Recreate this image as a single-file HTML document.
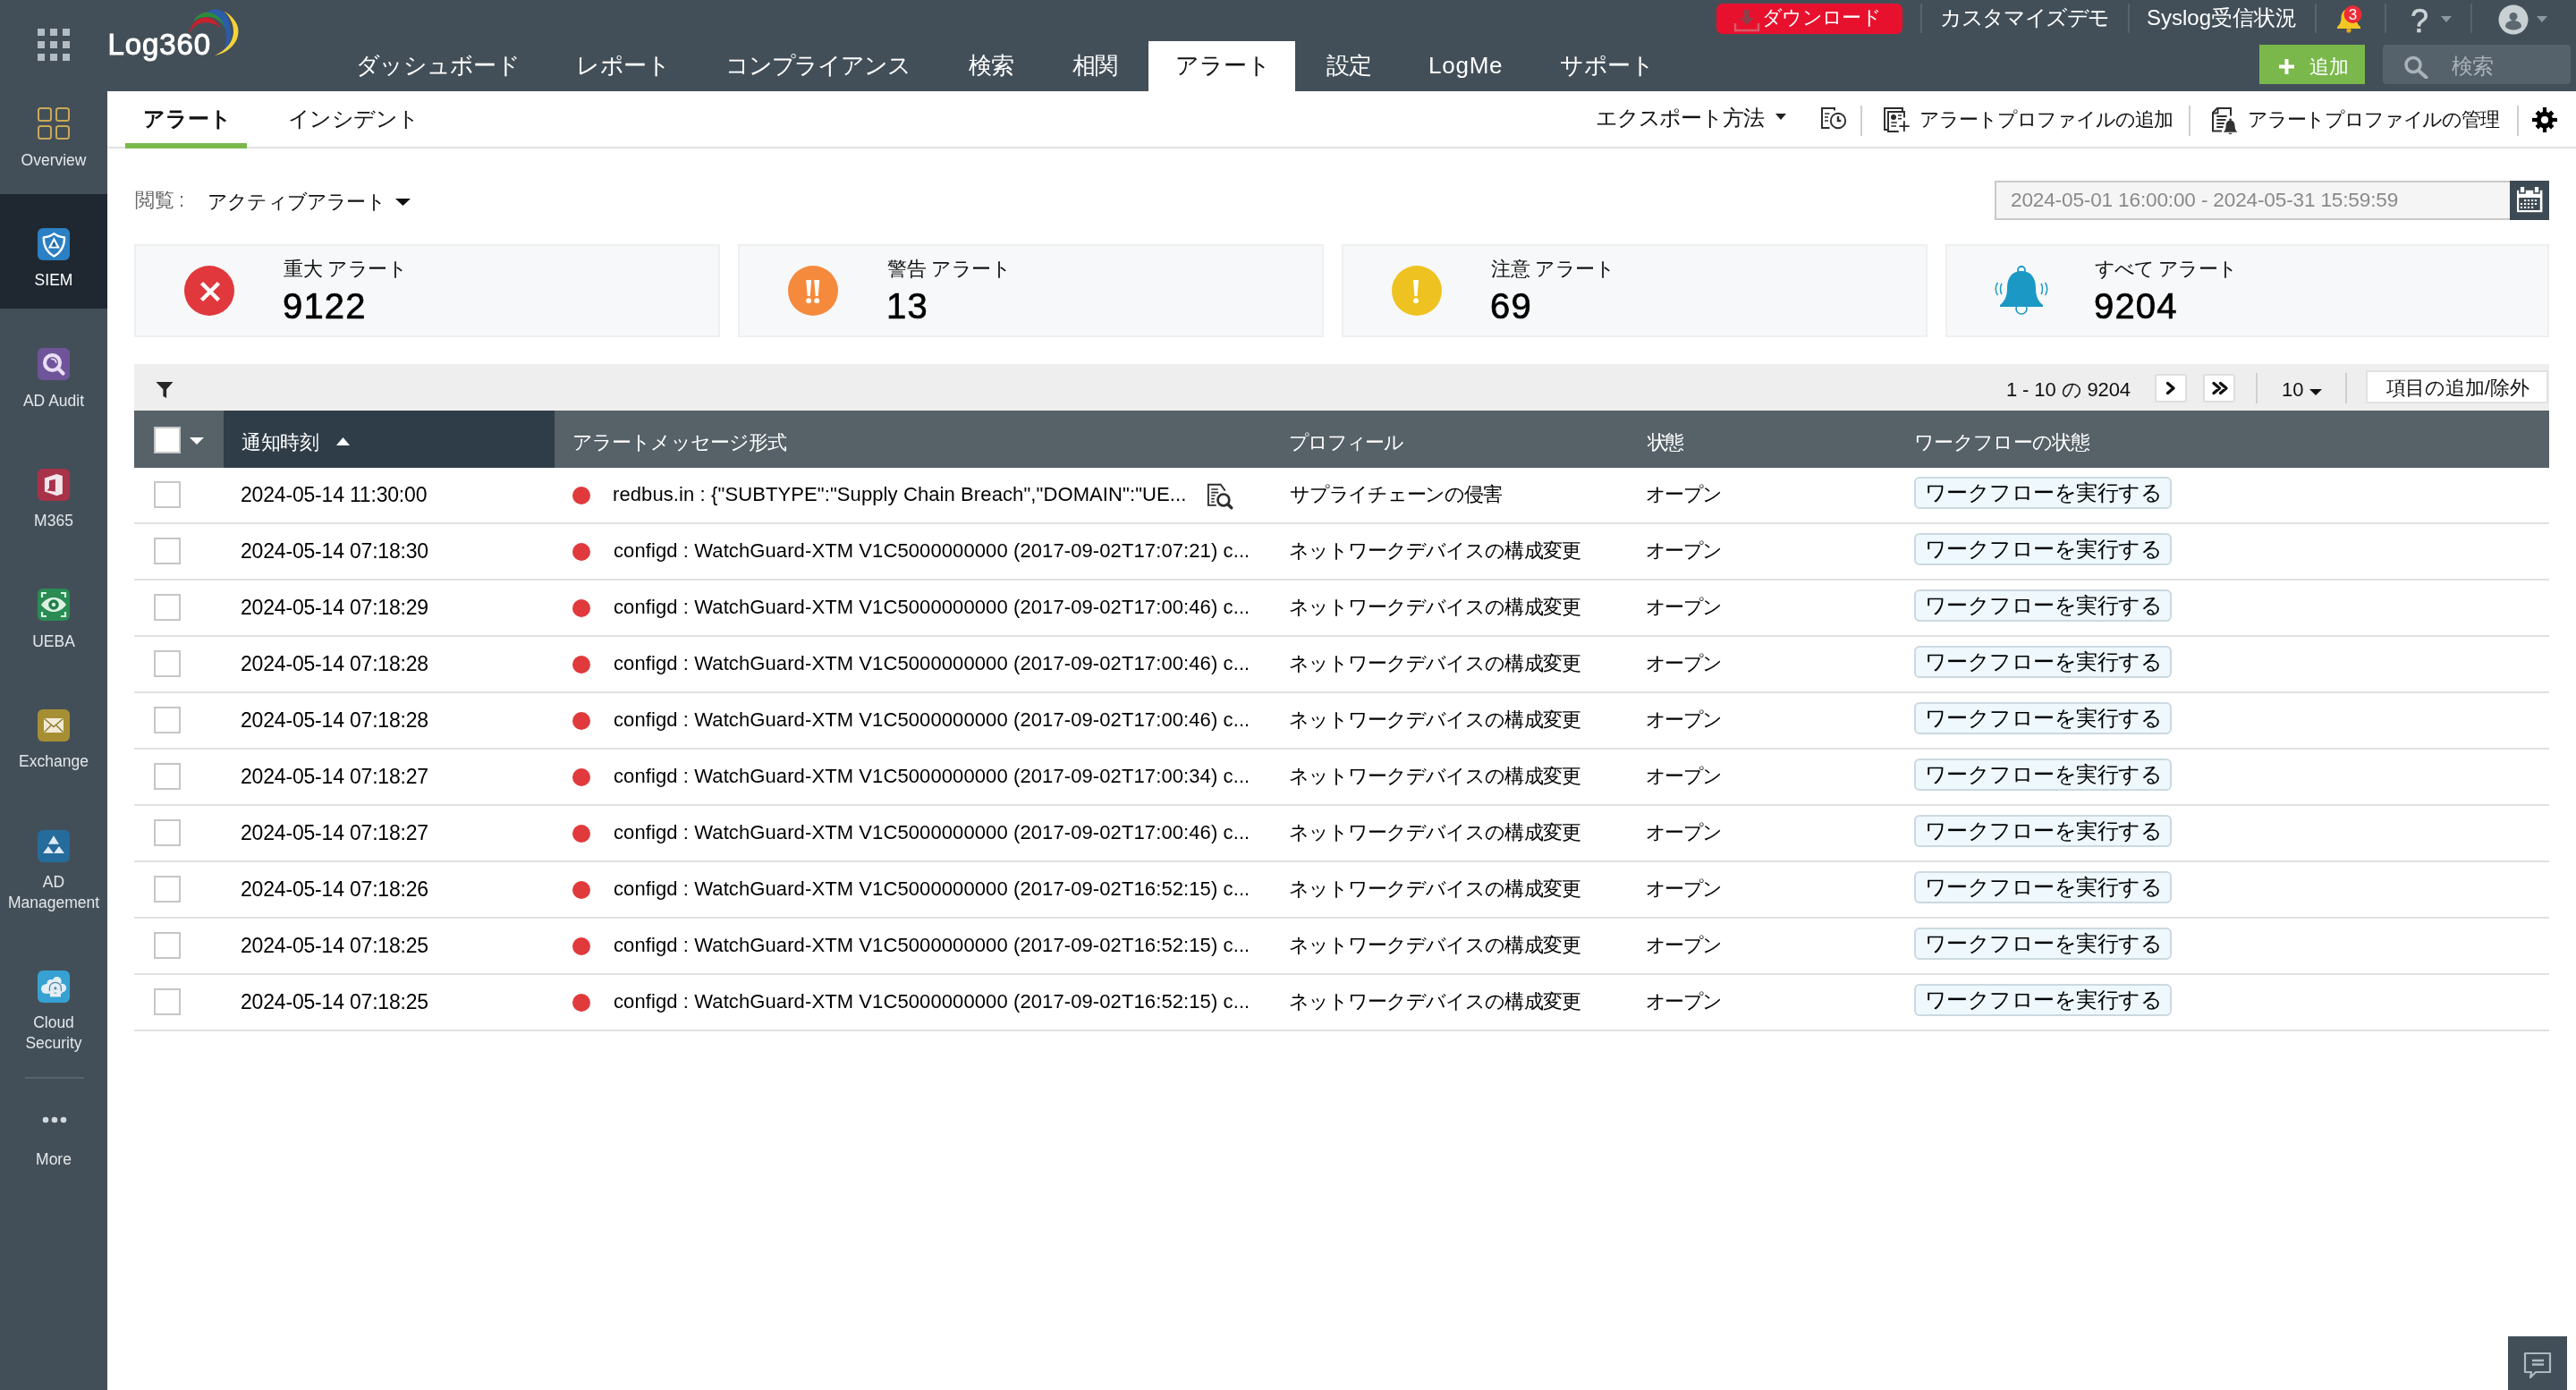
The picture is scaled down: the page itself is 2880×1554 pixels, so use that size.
<!DOCTYPE html>
<html lang="ja">
<head>
<meta charset="utf-8">
<title>Log360</title>
<style>
*{box-sizing:border-box;margin:0;padding:0}
html,body{width:2880px;height:1554px;overflow:hidden;background:#fff}
body{font-family:"Liberation Sans",sans-serif;color:#000;position:relative}
.a{position:absolute;white-space:nowrap}
svg{display:block;position:absolute}
/* top */
#top{left:0;top:0;width:2880px;height:102px;background:#434f58}
#side{left:0;top:102px;width:120px;height:1452px;background:#434f58}
.nav{top:55px;height:36px;line-height:36px;font-size:26px;color:#fff}
#navact{left:1284px;top:46px;width:164px;height:56px;background:#fff}
.tr{top:3px;height:34px;line-height:34px;font-size:24px;color:#fff}
.vsep{width:2px;background:#58636c;top:4px;height:33px}
/* sidebar */
.sic{left:42px;width:36px;height:36px;border-radius:6px}
.slb{left:0;width:120px;text-align:center;font-size:17.5px;line-height:23px;color:#e3e7ea}
/* subtab */
.st{top:114px;height:36px;line-height:36px;font-size:24px;color:#111}
.ssep{width:2px;background:#cfcfcf;top:118px;height:34px}
/* cards */
.card{top:273px;height:104px;background:#f7f8f9;border:2px solid #eeeff0}
.clab{top:286px;height:30px;line-height:30px;font-size:22px;color:#111}
.cnum{top:318px;height:48px;line-height:48px;font-size:40px;color:#000;-webkit-text-stroke:0.700px #000}
.circ{top:297px;width:56px;height:56px;border-radius:50%}
/* table */
.th{top:479px;height:32px;line-height:32px;font-size:22px;color:#fff}
.row{left:150px;width:2700px;height:63px;border-bottom:2px solid #e1e1e1}
.row .a{top:13px;height:34px;line-height:34px;font-size:22px;color:#000}
.cb{left:22px;top:15px !important;width:30px;height:30px !important;border:2px solid #c6c6c6;background:#fff}
.dot{left:490px;top:21px !important;width:20px;height:20px !important;border-radius:50%;background:#e03a3c}
.wf{left:1990px;top:10px !important;width:288px;height:36px !important;line-height:32px !important;border:2px solid #cbd9e0;border-radius:6px;background:#eef8fd;font-size:24px !important;text-align:center}
.row .wft{font-size:24px;top:11px;letter-spacing:-0.47px}
.row .dt{letter-spacing:-.19px;font-size:23px}
.row .msg{letter-spacing:.1px}
.row .stt{letter-spacing:-1.67px}
.pb{top:418px;width:36px;height:32px;background:#fff;border:2px solid #dedede;border-radius:3px}
</style>
</head>
<body><div id="wrap" style="position:absolute;left:0;top:0;width:2880px;height:1554px;will-change:transform">
<div class="a" id="top"></div>
<div class="a" id="side"></div>

<!-- TOPBAR -->
<svg class="a" style="left:42px;top:32px" width="36" height="36" viewBox="0 0 36 36" fill="#b3bcc2"><rect x="0" y="0" width="8" height="8"/><rect x="14" y="0" width="8" height="8"/><rect x="28" y="0" width="8" height="8"/><rect x="0" y="14" width="8" height="8"/><rect x="14" y="14" width="8" height="8"/><rect x="28" y="14" width="8" height="8"/><rect x="0" y="28" width="8" height="8"/><rect x="14" y="28" width="8" height="8"/><rect x="28" y="28" width="8" height="8"/></svg>
<div class="a" id="logo" style="left:120.500px;top:30px;height:40px;line-height:40px;font-size:33px;color:#fff;-webkit-text-stroke:1px #fff;letter-spacing:0.900px">Log360</div>
<svg class="a" id="swoosh" style="left:208px;top:6px" width="62" height="60" viewBox="0 0 62 60">
<g transform="translate(0,2)"><path d="M4.400 28.500C5 18 14 11.500 22 11.500C29 11.500 35 16 38.500 23.500C33 18.500 27 17 21.500 17.200C13 17.500 7 22 4.400 30Z" fill="#c8202c"/>
<path d="M8 16C12 8.500 19 5.500 25 5.500C35 5.500 43 14 46 27.500C41 17 33.500 10.800 25 10.800C18 10.800 12 12.500 8 16Z" fill="#2e8b3e"/>
<path d="M23.500 5.500C28 2.500 34 1.500 39 3.500C47 8 51 20 49.500 36C48.500 42 45 47 41 49.500C44.500 44 45.500 38 45 31C44 18 37 7 23.500 5.500Z" fill="#2a5caa"/></g>
<path d="M42.500 6.500C52 12 58.500 20 58.500 29C58.500 43 46 53.500 32 56C44 51 53 41 53 29C53 20 49 12.500 42.500 6.500Z" fill="#f4d23a"/>
</svg>

<div class="a nav" id="n1" style="left:398px;letter-spacing:-0.75px">ダッシュボード</div>
<div class="a nav" id="n2" style="left:644px;letter-spacing:-0.5px">レポート</div>
<div class="a nav" id="n3" style="left:811px;letter-spacing:-1.21px">コンプライアンス</div>
<div class="a nav" id="n4" style="left:1083px;letter-spacing:-1px">検索</div>
<div class="a nav" id="n5" style="left:1199px;letter-spacing:-1px">相関</div>
<div class="a" id="navact"></div>
<div class="a nav" id="n6" style="left:1314px;color:#111">アラート</div>
<div class="a nav" id="n7" style="left:1483px;letter-spacing:-1px">設定</div>
<div class="a nav" id="n8" style="left:1597px;letter-spacing:0.75px">LogMe</div>
<div class="a nav" id="n9" style="left:1744px;letter-spacing:-0.5px">サポート</div>

<div class="a" id="dl" style="left:1919px;top:4px;width:208px;height:34px;background:#e8112d;border-radius:7px"></div>
<svg class="a" style="left:1938px;top:10px" width="30" height="26" viewBox="0 0 30 26"><path d="M12 1h6v9h5l-8 8-8-8h5z" fill="#8e3f4c"/><path d="M2 16v8h26v-8" fill="none" stroke="#d65a68" stroke-width="2.5"/></svg>
<div class="a" id="dlt" style="left:1970px;top:3px;height:34px;line-height:33px;font-size:22px;color:#fff;letter-spacing:-0.7px">ダウンロード</div>
<div class="a vsep" style="left:2147px"></div>
<div class="a tr" id="t1" style="left:2169px;letter-spacing:-1.36px">カスタマイズデモ</div>
<div class="a vsep" style="left:2379px"></div>
<div class="a tr" id="t2" style="left:2400px">Syslog受信状況</div>
<div class="a vsep" style="left:2588px"></div>
<svg class="a" style="left:2611px;top:6px" width="32" height="32" viewBox="0 0 32 32"><path d="M15 4c-6 0-8.5 5-8.500 10 0 5-2 8-4.500 10v2h26v-2c-2.500-2-4.500-5-4.500-10 0-5-2.500-10-8.500-10z" fill="#f3c623"/><circle cx="15" cy="28" r="2.600" fill="#e0a81a"/><circle cx="19.500" cy="10" r="10" fill="#ee2b37"/><text x="19.500" y="16" font-family="Liberation Sans, sans-serif" font-size="17" fill="#fff" text-anchor="middle">3</text></svg>
<div class="a vsep" style="left:2666px"></div>
<div class="a" id="qm" style="left:2695px;top:4px;height:40px;line-height:40px;font-size:36px;color:#ccd3d7;-webkit-text-stroke:0.600px #ccd3d7">?</div>
<svg class="a" style="left:2729px;top:18px" width="12" height="7" viewBox="0 0 12 7"><path d="M0 0h12l-6 7z" fill="#8d979e"/></svg>
<div class="a vsep" style="left:2762px"></div>
<svg class="a" style="left:2793px;top:5px" width="34" height="34" viewBox="0 0 34 34"><circle cx="17" cy="17" r="16.500" fill="#c9d0d4"/><circle cx="17" cy="13.500" r="4.500" fill="#5d6870"/><path d="M8 25c0-5 4-7 9-7s9 2 9 7c-2 2-5 3.500-9 3.500s-7-1.500-9-3.500z" fill="#5d6870"/></svg>
<svg class="a" style="left:2836px;top:18px" width="12" height="7" viewBox="0 0 12 7"><path d="M0 0h12l-6 7z" fill="#8d979e"/></svg>

<div class="a" id="addb" style="left:2526px;top:50px;width:118px;height:44px;background:#7ab84c"></div>
<svg class="a" style="left:2548px;top:66px" width="17" height="17" viewBox="0 0 17 17"><path d="M6.500 0h4v6.500h6.500v4h-6.500v6.500h-4v-6.500h-6.500v-4h6.500z" fill="#fff"/></svg>
<div class="a" id="addt" style="left:2581.5px;top:57px;height:36px;line-height:36px;font-size:22px;color:#fff">追加</div>
<div class="a" id="srch" style="left:2664px;top:50px;width:210px;height:44px;background:#56626b;border-radius:4px"></div>
<svg class="a" style="left:2687px;top:62px" width="28" height="26" viewBox="0 0 28 26"><circle cx="11" cy="10.500" r="8" fill="none" stroke="#a9b2b8" stroke-width="3.500"/><path d="M16.500 16.500l9 8" stroke="#a9b2b8" stroke-width="4" stroke-linecap="round"/></svg>
<div class="a" id="srt" style="left:2740.5px;top:56px;height:36px;line-height:36px;font-size:24px;color:#a9b2b8;letter-spacing:-1px">検索</div>

<!-- SIDEBAR -->
<svg class="a" style="left:42px;top:120px" width="36" height="36" viewBox="0 0 36 36" fill="none" stroke="#c9a858" stroke-width="2"><rect x="1" y="1" width="14" height="14" rx="2.500"/><rect x="21" y="1" width="14" height="14" rx="2.500"/><rect x="1" y="21" width="14" height="14" rx="2.500"/><rect x="21" y="21" width="14" height="14" rx="2.500"/></svg>
<div class="a slb" id="L0" style="top:168px">Overview</div>
<div class="a" style="left:0;top:217px;width:120px;height:128px;background:#1f2830"></div>
<div class="a sic" style="top:255px;background:#2b7fc3"></div>
<svg class="a" style="left:42px;top:255px" width="36" height="36" viewBox="0 0 36 36"><path d="M18.400 6.200c-3.200 2.600-7.500 4-11.700 4.300 0 10 3.500 16.500 11.700 21 8.200-4.500 11.700-11 11.700-21-4.200-.3-8.500-1.700-11.700-4.300z" fill="none" stroke="#fff" stroke-width="2.300" stroke-linejoin="round"/><path d="M18.400 10.200l6.600 12.400h-13.200z" fill="#fff"/><path d="M18.400 14.800l3.300 6h-6.600z" fill="#2b7fc3"/><path d="M18.400 16.300v2.600M18.400 19.500v.9" stroke="#15385a" stroke-width="1.300"/></svg>
<div class="a slb" id="L1" style="top:302px;color:#fff">SIEM</div>

<div class="a sic" style="top:389px;background:#6f5499"></div>
<svg class="a" style="left:42px;top:389px" width="36" height="36" viewBox="0 0 36 36"><circle cx="16.500" cy="16.500" r="8.500" fill="none" stroke="#e9def5" stroke-width="4.100"/><path d="M23.800 23.800l4.700 4.700" stroke="#e9def5" stroke-width="4.200" stroke-linecap="round"/><path d="M15.800 12.300a4.600 4.600 0 0 1 4.900 3.900" fill="none" stroke="#e9def5" stroke-width="1.800" stroke-linecap="round"/></svg>
<div class="a slb" id="L2" style="top:437px">AD Audit</div>

<div class="a sic" style="top:524px;background:#a8324a"></div>
<svg class="a" style="left:42px;top:524px" width="36" height="36" viewBox="0 0 36 36"><path fill-rule="evenodd" d="M7.900 10.400L21.400 5.900L27.900 7.900V27.900L21.400 30.300L7.900 25.500ZM13 13.200L19.900 11.800V25.600L10.500 24.600L13 21.500Z" fill="#f0e6ea"/></svg>
<div class="a slb" id="L3" style="top:571px">M365</div>

<div class="a sic" style="top:658px;background:#2a8c52"></div>
<svg class="a" style="left:42px;top:658px" width="36" height="36" viewBox="0 0 36 36"><path d="M4 18c4-5.500 9-8 14-8s10 2.500 14 8c-4 5.500-9 8-14 8s-10-2.500-14-8z" fill="#def0e4"/><circle cx="18" cy="18" r="5.800" fill="#1f7f48"/><circle cx="18" cy="18" r="2.200" fill="#def0e4"/><path d="M5 10v-5h5M26 5h5v5M31 26v5h-5M10 31h-5v-5" fill="none" stroke="#d8f5e3" stroke-width="2.200"/></svg>
<div class="a slb" id="L4" style="top:706px">UEBA</div>

<div class="a sic" style="top:793px;background:#a68f33"></div>
<svg class="a" style="left:42px;top:793px" width="36" height="36" viewBox="0 0 36 36"><rect x="7" y="10" width="22" height="16" rx="1" fill="#f1ead6"/><path d="M7.500 10.500l10.500 9 10.500-9M7.500 25.500l8-8M28.500 25.500l-8-8" fill="none" stroke="#8d7a2c" stroke-width="1.400"/></svg>
<div class="a slb" id="L5" style="top:840px">Exchange</div>

<div class="a sic" style="top:928px;background:#256b9b"></div>
<svg class="a" style="left:42px;top:928px" width="36" height="36" viewBox="0 0 36 36" fill="#dfe9f5"><path d="M18 6.300l6 9.500h-12z"/><path d="M12 18l6 8h-12z"/><path d="M24 18l6 8h-12z"/></svg>
<div class="a slb" id="L6" style="top:975px">AD<br>Management</div>

<div class="a sic" style="top:1085px;background:#36a1d2"></div>
<svg class="a" style="left:42px;top:1085px" width="36" height="36" viewBox="0 0 36 36"><g fill="#e4eef4"><circle cx="9.200" cy="20.500" r="5.200"/><circle cx="15" cy="14.500" r="4.500"/><circle cx="21.700" cy="12" r="5"/><circle cx="27.300" cy="19.500" r="4.800"/><rect x="9" y="15" width="18.500" height="10.700"/></g><path d="M13.400 22.500V19.500a6.500 6.200 0 0 1 13 0V22.500z" fill="#e4eef4" stroke="#4f86a3" stroke-width="1.300"/><rect x="13.900" y="21.500" width="12.100" height="8" rx="0.800" fill="#e4eef4"/><circle cx="19.900" cy="19.700" r="1.500" fill="#4f86a3"/><rect x="18.500" y="24.600" width="2.800" height="1.100" fill="#6b94a8"/></svg>
<div class="a slb" id="L7" style="top:1132px">Cloud<br>Security</div>

<div class="a" style="left:28px;top:1204px;width:66px;height:2px;background:#58646d"></div>
<svg class="a" style="left:47px;top:1248px" width="28" height="8" viewBox="0 0 28 8" fill="#d3d8dc"><circle cx="4" cy="4" r="3.300"/><circle cx="14" cy="4" r="3.300"/><circle cx="24" cy="4" r="3.300"/></svg>
<div class="a slb" id="L8" style="top:1285px">More</div>

<!-- SUBTABS -->
<div class="a" style="left:120px;top:164px;width:2760px;height:2px;background:#e2e2e2"></div>
<div class="a" style="left:140px;top:160px;width:136px;height:6px;background:#7ab84c"></div>
<div class="a st" id="s1" style="top:115px;left:160px;font-weight:bold">アラート</div>
<div class="a st" id="s2" style="top:115px;left:322px;letter-spacing:-0.6px">インシデント</div>
<div class="a st" id="s3" style="top:114px;left:1784px;letter-spacing:-1.21px">エクスポート方法</div>
<svg class="a" style="left:1985px;top:127px" width="12" height="7" viewBox="0 0 12 7"><path d="M0 0h12l-6 7z" fill="#222"/></svg>
<svg class="a" id="ic_sched" style="left:2034px;top:119px" width="32" height="28" viewBox="0 0 32 28" fill="none" stroke="#2e2e2e" stroke-width="2"><path d="M17 4.600V2H3V24H11.500"/><path d="M6 8H11.500M6 12H10M6 16H10" stroke-width="1.500"/><circle cx="21" cy="16" r="8.200" stroke-width="1.900"/><path d="M21 11V16H24.300" stroke-width="2.400"/></svg>
<div class="a ssep" style="left:2080px"></div>
<svg class="a" id="ic_add" style="left:2105px;top:119px" width="32" height="30" viewBox="0 0 32 30" fill="none" stroke="#2b2b2b" stroke-width="1.900"><path d="M5.500 26H2V2H22V5.500"/><path d="M24 12.500V6H6V28H17.700"/><circle cx="12" cy="11.900" r="3" fill="#2b2b2b" stroke="none"/><path d="M17 10H21M17 13.700H21M9.300 17.900H15.800M9.300 22H15" stroke-width="1.500"/><path d="M18.300 22.100H29.700M23.850 16.300V28"/></svg>
<div class="a st" id="s4" style="top:116px;left:2146px;font-size:22px;letter-spacing:-1px">アラートプロファイルの追加</div>
<div class="a ssep" style="left:2447px"></div>
<svg class="a" id="ic_mng" style="left:2472px;top:119px" width="32" height="32" viewBox="0 0 32 32" fill="none" stroke="#2e2e2e" stroke-width="2"><path d="M12 27.600H2V7L7 2H22V10.600" stroke-linecap="butt"/><path d="M2.500 7.500H7.600V2" stroke-width="1.800"/><path d="M6.300 11H17.700M6.300 15H16.500M6.300 19H14.800M6.300 23H13.500" stroke-width="1.800"/><path d="M21.600 15.500c-3.600 0-5 3.200-5 6.500 0 3.300-1.200 5-2.800 6.700h15.600c-1.600-1.700-2.800-3.400-2.800-6.700 0-3.300-1.400-6.500-5-6.500z" fill="#333" stroke="none"/><circle cx="21.600" cy="14.800" r="1.400" fill="#333" stroke="none"/><path d="M19.500 29.800a2.100 1.400 0 0 0 4.200 0z" fill="#333" stroke="none"/></svg>
<div class="a st" id="s5" style="top:116px;left:2513px;font-size:22px;letter-spacing:-1.17px">アラートプロファイルの管理</div>
<div class="a ssep" style="left:2814px"></div>
<svg class="a" id="ic_gear" style="left:2831px;top:120px" width="28" height="28" viewBox="0 0 28 28"><g fill="#000"><circle cx="14" cy="14" r="9.200"/><rect x="11.900" y="0" width="4.200" height="28"/><rect x="11.900" y="0" width="4.200" height="28" transform="rotate(90 14 14)"/><rect x="11.600" y="1.600" width="4.800" height="24.800" transform="rotate(45 14 14)"/><rect x="11.600" y="1.600" width="4.800" height="24.800" transform="rotate(135 14 14)"/></g><circle cx="14" cy="14" r="4.100" fill="#fff"/></svg>

<!-- VIEW ROW -->
<div class="a" id="v1" style="left:151px;top:207px;height:34px;line-height:34px;font-size:22px;color:#666;letter-spacing:-0.33px">閲覧 :</div>
<div class="a" id="v2" style="left:232px;top:209px;height:34px;line-height:34px;font-size:22px;color:#111;letter-spacing:-0.81px">アクティブアラート</div>
<svg class="a" style="left:442px;top:222px" width="17" height="8" viewBox="0 0 17 8"><path d="M0 0h17l-8.500 8z" fill="#111"/></svg>
<div class="a" id="dbox" style="left:2230px;top:202px;width:578px;height:44px;background:#f5f5f5;border:2px solid #c9c9c9"></div>
<div class="a" id="dtxt" style="left:2248px;top:206px;height:36px;line-height:36px;font-size:22.600px;color:#8a8a8a;letter-spacing:-0.16px">2024-05-01 16:00:00 - 2024-05-31 15:59:59</div>
<div class="a" id="dcal" style="left:2806px;top:202px;width:44px;height:44px;background:#3e4a53"></div>
<svg class="a" id="ic_cal" style="left:2814px;top:209px" width="29" height="29" viewBox="0 0 29 29"><rect x="0" y="3.800" width="28.400" height="24.400" fill="#fff"/><rect x="2.200" y="12" width="23.600" height="14" fill="#3e4a53"/><rect x="2.200" y="0" width="7.600" height="7.700" fill="#3e4a53"/><rect x="18.200" y="0" width="7.600" height="7.700" fill="#3e4a53"/><rect x="3.900" y="0" width="4.300" height="6.100" fill="#fff"/><rect x="19.900" y="0" width="4.300" height="6.100" fill="#fff"/><g fill="#fff"><rect x="8" y="14.1" width="2.200" height="2"/><rect x="11.9" y="14.1" width="2.200" height="2"/><rect x="16" y="14.1" width="2.200" height="2"/><rect x="19.9" y="14.1" width="2.200" height="2"/><rect x="3.9" y="18" width="2.200" height="2"/><rect x="8" y="18" width="2.200" height="2"/><rect x="11.9" y="18" width="2.200" height="2"/><rect x="16" y="18" width="2.200" height="2"/><rect x="19.9" y="18" width="2.200" height="2"/><rect x="3.9" y="21.9" width="2.200" height="2"/><rect x="8" y="21.9" width="2.200" height="2"/><rect x="11.9" y="21.9" width="2.200" height="2"/><rect x="16" y="21.9" width="2.200" height="2"/></g></svg>

<!-- CARDS -->
<div class="a card" style="left:150px;width:655px"></div>
<div class="a card" style="left:825px;width:655px"></div>
<div class="a card" style="left:1500px;width:655px"></div>
<div class="a card" style="left:2175px;width:675px"></div>
<div class="a circ" style="left:206px;background:#e0383c"></div>
<svg class="a" style="left:222.600px;top:313.800px" width="24" height="24" viewBox="0 0 24 24"><path d="M2.500 2.500l19 19M21.500 2.500l-19 19" stroke="#fff" stroke-width="4.500"/></svg>
<div class="a circ" style="left:881px;background:#f58a3c"></div>
<svg class="a" style="left:899px;top:311px" width="20" height="30" viewBox="0 0 20 30" fill="#fff"><path d="M2.200 2h6l-1.500 18h-3z"/><path d="M11.200 2h6l-1.500 18h-3z"/><circle cx="5.200" cy="25.200" r="2.900"/><circle cx="14.200" cy="25.200" r="2.900"/></svg>
<div class="a circ" style="left:1556px;background:#eec321"></div>
<svg class="a" style="left:1578.300px;top:311px" width="10" height="30" viewBox="0 0 10 30" fill="#fff"><path d="M2 2h6l-1.500 18h-3z"/><circle cx="5" cy="25.200" r="2.900"/></svg>
<svg class="a" id="bigbell" style="left:2230px;top:296px" width="60" height="56" viewBox="0 0 60 56"><circle cx="30" cy="49" r="6" fill="none" stroke="#1b98c4" stroke-width="1.600"/><circle cx="30" cy="6" r="4" fill="none" stroke="#1b98c4" stroke-width="1.800"/><path d="M30 7c-11 0-16 8-16 19 0 10-3 15-8 19v2h48v-2c-5-4-8-9-8-19 0-11-5-19-16-19z" fill="#1b98c4"/><path d="M8 21c-2 3-2 9 0 12M3.500 20c-3 4-3 10 0 14M52 21c2 3 2 9 0 12M56.500 20c3 4 3 10 0 14" fill="none" stroke="#1b98c4" stroke-width="1.500"/></svg>
<div class="a clab" id="c1" style="left:317px;letter-spacing:-0.33px">重大 アラート</div>
<div class="a cnum" id="c1n" style="left:316px;letter-spacing:1.17px">9122</div>
<div class="a clab" id="c2" style="left:992px;letter-spacing:-0.33px">警告 アラート</div>
<div class="a cnum" id="c2n" style="left:991px;letter-spacing:1.17px">13</div>
<div class="a clab" id="c3" style="left:1667px;letter-spacing:-0.33px">注意 アラート</div>
<div class="a cnum" id="c3n" style="left:1666px;letter-spacing:1.17px">69</div>
<div class="a clab" id="c4" style="left:2342px;letter-spacing:-0.93px">すべて アラート</div>
<div class="a cnum" id="c4n" style="left:2341px;letter-spacing:1.17px">9204</div>

<!-- TOOLBAR -->
<div class="a" style="left:150px;top:407px;width:2700px;height:52px;background:#eeeeee"></div>
<svg class="a" style="left:174px;top:426px" width="20" height="20" viewBox="0 0 20 20"><path d="M0.400 1H19.500L12.100 9.300V19L8.400 17V9.300z" fill="#262626"/></svg>
<div class="a" id="pg" style="left:2243px;top:419px;height:34px;line-height:34px;font-size:22px;color:#111;letter-spacing:-0.12px">1 - 10 の 9204</div>
<div class="a pb" style="left:2409px"></div>
<svg class="a" style="left:2421px;top:426px" width="12" height="16" viewBox="0 0 12 16"><path d="M2.500 2.500l6.500 5.500-6.500 5.500" fill="none" stroke="#111" stroke-width="3.400" stroke-linecap="round" stroke-linejoin="round"/></svg>
<div class="a pb" style="left:2463px"></div>
<svg class="a" style="left:2472px;top:426px" width="20" height="16" viewBox="0 0 20 16"><path d="M3 2.500l6.500 5.500-6.500 5.500M10.500 2.500l6.500 5.500-6.500 5.500" fill="none" stroke="#111" stroke-width="3.400" stroke-linecap="round" stroke-linejoin="round"/></svg>
<div class="a" style="left:2522px;top:417px;width:2px;height:34px;background:#d0d0d0"></div>
<div class="a" id="pp" style="left:2551px;top:419px;height:34px;line-height:34px;font-size:22px;color:#111">10</div>
<svg class="a" style="left:2582px;top:435px" width="14" height="7" viewBox="0 0 14 7"><path d="M0 0h14l-7 7z" fill="#111"/></svg>
<div class="a" style="left:2622px;top:417px;width:2px;height:34px;background:#d0d0d0"></div>
<div class="a" id="colb" style="left:2645px;top:414px;width:204px;height:37px;background:#fff;border:2px solid #e2e2e2"></div>
<div class="a" id="colt" style="left:2667.5px;top:417px;height:34px;line-height:34px;font-size:22px;color:#111;letter-spacing:-0.14px">項目の追加/除外</div>

<!-- TABLE HEADER -->
<div class="a" style="left:150px;top:459px;width:2700px;height:64px;background:#566168"></div>
<div class="a" style="left:250px;top:459px;width:370px;height:64px;background:#2f3d48"></div>
<div class="a" style="left:172px;top:477px;width:30px;height:30px;background:#fff;border:2px solid #c6c6c6"></div>
<svg class="a" style="left:212px;top:489px" width="16" height="8" viewBox="0 0 16 8"><path d="M0 0h16l-8 8z" fill="#fff"/></svg>
<div class="a th" id="h1" style="left:270px;letter-spacing:-0.5px">通知時刻</div>
<svg class="a" style="left:376px;top:489px" width="15" height="9" viewBox="0 0 15 9"><path d="M0 9h15l-7.500-9z" fill="#fff"/></svg>
<div class="a th" id="h2" style="left:640px;letter-spacing:-0.9px">アラートメッセージ形式</div>
<div class="a th" id="h3" style="left:1441px;letter-spacing:-1.65px">プロフィール</div>
<div class="a th" id="h4" style="left:1842px;letter-spacing:-2.75px">状態</div>
<div class="a th" id="h5" style="left:2140px;letter-spacing:-0.69px">ワークフローの状態</div>

<!-- ROWS -->
<div id="rows">
<div class="a row r0" style="top:523px"><div class="a cb"></div><div class="a dt" style="left:119px">2024-05-14 11:30:00</div><div class="a dot"></div><div class="a msg m1" style="left:535px">redbus.in : {&quot;SUBTYPE&quot;:&quot;Supply Chain Breach&quot;,&quot;DOMAIN&quot;:&quot;UE...</div><svg class="a" style="left:1199px;top:14px" width="32" height="32" viewBox="0 0 32 32" fill="none" stroke="#2e2e2e" stroke-width="1.900"><path d="M10.800 26.900H1.900V3.700H15.700L20.700 10.600"/><path d="M5.200 9H12.800M5.200 12.600H13.200M5.200 16H9.700M5.200 19.600H8.800M5.200 23H8.800" stroke-width="1.700"/><circle cx="18.900" cy="20.900" r="6.400" stroke-width="2.700"/><path d="M24 26L27.800 29.800" stroke-width="3.400" stroke-linecap="round"/></svg><div class="a pf" style="left:1292px;letter-spacing:-1.23px">サプライチェーンの侵害</div><div class="a stt" style="left:1690px">オープン</div><div class="a wf"></div><div class="a wft" style="left:2001.5px">ワークフローを実行する</div></div>
<div class="a row r1" style="top:586px"><div class="a cb"></div><div class="a dt" style="left:119px">2024-05-14 07:18:30</div><div class="a dot"></div><div class="a msg" style="left:536px">configd : WatchGuard-XTM V1C5000000000 (2017-09-02T17:07:21) c...</div><div class="a pf" style="left:1290.5px;letter-spacing:-0.91px">ネットワークデバイスの構成変更</div><div class="a stt" style="left:1690px">オープン</div><div class="a wf"></div><div class="a wft" style="left:2001.5px">ワークフローを実行する</div></div>
<div class="a row r2" style="top:649px"><div class="a cb"></div><div class="a dt" style="left:119px">2024-05-14 07:18:29</div><div class="a dot"></div><div class="a msg" style="left:536px">configd : WatchGuard-XTM V1C5000000000 (2017-09-02T17:00:46) c...</div><div class="a pf" style="left:1290.5px;letter-spacing:-0.91px">ネットワークデバイスの構成変更</div><div class="a stt" style="left:1690px">オープン</div><div class="a wf"></div><div class="a wft" style="left:2001.5px">ワークフローを実行する</div></div>
<div class="a row r3" style="top:712px"><div class="a cb"></div><div class="a dt" style="left:119px">2024-05-14 07:18:28</div><div class="a dot"></div><div class="a msg" style="left:536px">configd : WatchGuard-XTM V1C5000000000 (2017-09-02T17:00:46) c...</div><div class="a pf" style="left:1290.5px;letter-spacing:-0.91px">ネットワークデバイスの構成変更</div><div class="a stt" style="left:1690px">オープン</div><div class="a wf"></div><div class="a wft" style="left:2001.5px">ワークフローを実行する</div></div>
<div class="a row r4" style="top:775px"><div class="a cb"></div><div class="a dt" style="left:119px">2024-05-14 07:18:28</div><div class="a dot"></div><div class="a msg" style="left:536px">configd : WatchGuard-XTM V1C5000000000 (2017-09-02T17:00:46) c...</div><div class="a pf" style="left:1290.5px;letter-spacing:-0.91px">ネットワークデバイスの構成変更</div><div class="a stt" style="left:1690px">オープン</div><div class="a wf"></div><div class="a wft" style="left:2001.5px">ワークフローを実行する</div></div>
<div class="a row r5" style="top:838px"><div class="a cb"></div><div class="a dt" style="left:119px">2024-05-14 07:18:27</div><div class="a dot"></div><div class="a msg" style="left:536px">configd : WatchGuard-XTM V1C5000000000 (2017-09-02T17:00:34) c...</div><div class="a pf" style="left:1290.5px;letter-spacing:-0.91px">ネットワークデバイスの構成変更</div><div class="a stt" style="left:1690px">オープン</div><div class="a wf"></div><div class="a wft" style="left:2001.5px">ワークフローを実行する</div></div>
<div class="a row r6" style="top:901px"><div class="a cb"></div><div class="a dt" style="left:119px">2024-05-14 07:18:27</div><div class="a dot"></div><div class="a msg" style="left:536px">configd : WatchGuard-XTM V1C5000000000 (2017-09-02T17:00:46) c...</div><div class="a pf" style="left:1290.5px;letter-spacing:-0.91px">ネットワークデバイスの構成変更</div><div class="a stt" style="left:1690px">オープン</div><div class="a wf"></div><div class="a wft" style="left:2001.5px">ワークフローを実行する</div></div>
<div class="a row r7" style="top:964px"><div class="a cb"></div><div class="a dt" style="left:119px">2024-05-14 07:18:26</div><div class="a dot"></div><div class="a msg" style="left:536px">configd : WatchGuard-XTM V1C5000000000 (2017-09-02T16:52:15) c...</div><div class="a pf" style="left:1290.5px;letter-spacing:-0.91px">ネットワークデバイスの構成変更</div><div class="a stt" style="left:1690px">オープン</div><div class="a wf"></div><div class="a wft" style="left:2001.5px">ワークフローを実行する</div></div>
<div class="a row r8" style="top:1027px"><div class="a cb"></div><div class="a dt" style="left:119px">2024-05-14 07:18:25</div><div class="a dot"></div><div class="a msg" style="left:536px">configd : WatchGuard-XTM V1C5000000000 (2017-09-02T16:52:15) c...</div><div class="a pf" style="left:1290.5px;letter-spacing:-0.91px">ネットワークデバイスの構成変更</div><div class="a stt" style="left:1690px">オープン</div><div class="a wf"></div><div class="a wft" style="left:2001.5px">ワークフローを実行する</div></div>
<div class="a row r9" style="top:1090px"><div class="a cb"></div><div class="a dt" style="left:119px">2024-05-14 07:18:25</div><div class="a dot"></div><div class="a msg" style="left:536px">configd : WatchGuard-XTM V1C5000000000 (2017-09-02T16:52:15) c...</div><div class="a pf" style="left:1290.5px;letter-spacing:-0.91px">ネットワークデバイスの構成変更</div><div class="a stt" style="left:1690px">オープン</div><div class="a wf"></div><div class="a wft" style="left:2001.5px">ワークフローを実行する</div></div>
</div><!--endrows-->

<!-- chat -->
<div class="a" style="left:2804px;top:1494px;width:66px;height:60px;background:#434f58"></div>
<svg class="a" style="left:2821px;top:1511px" width="32" height="30" viewBox="0 0 32 30" fill="none" stroke="#adbac3" stroke-width="2.200" stroke-linejoin="round"><path d="M2 2h28v21h-16l-6 6 1-6h-7z"/><path d="M10 10h13M10 14.500h13" stroke-width="2.400"/></svg>
</div></body>
</html>
